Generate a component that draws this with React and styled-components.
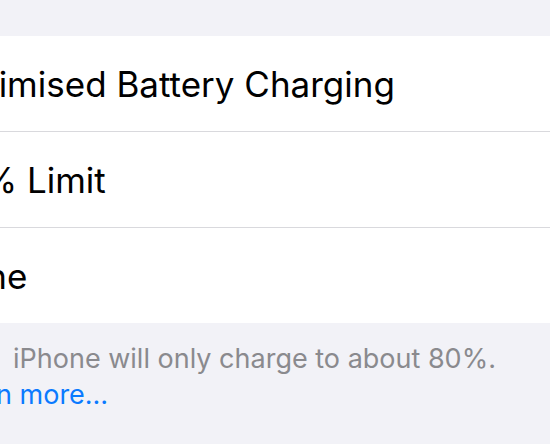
import styled, { createGlobalStyle } from "styled-components";

const GlobalStyle = createGlobalStyle`
  html, body {
    margin: 0;
    padding: 0;
    background: #f2f2f7;
    overflow: hidden;
  }
  body {
    font-family: Inter, "Noto Sans", "Liberation Sans", sans-serif;
    -webkit-font-smoothing: antialiased;
  }
`;

const Screen = styled.div`
  width: 550px;
  height: 444px;
  overflow: hidden;
  background: #f2f2f7;
`;

const Page = styled.div`
  margin-left: -61px;
  padding-top: 36px;
`;

const Group = styled.div`
  background: #ffffff;
  display: flex;
  flex-direction: column;
`;

const Row = styled.div`
  height: ${(p) => (p.$last ? "95px" : "96px")};
  display: flex;
  align-items: center;
  box-sizing: border-box;
  border-bottom: ${(p) => (p.$last ? "none" : "1px solid #d9d9dd")};
  padding-right: 20px;
`;

const Label = styled.span`
  font-size: 35px;
  color: #000;
  white-space: nowrap;
  margin-top: 1px;
`;

const Footer = styled.p`
  margin: 0;
  padding: 18px 30px 0 0;
  font-size: 27px;
  line-height: 36px;
  color: #8a8a8e;
`;

const Line = styled.span`
  display: block;
  white-space: nowrap;
  padding-left: ${(p) => p.$indent || 0}px;
`;

const LearnMore = styled.a`
  color: #0a7aff;
  text-decoration: none;
`;

const options = ["Optimised Battery Charging", "80% Limit", "None"];

const App = () => {
  return (
    <Screen>
      <GlobalStyle />
      <Page>
        <Group>
          {options.map((label, i) => (
            <Row key={label} $last={i === options.length - 1}>
              <Label>{label}</Label>
            </Row>
          ))}
        </Group>
        <Footer>
          <Line $indent={74}>iPhone will only charge to about 80%.</Line>
          <Line>
            <LearnMore href="#">Learn more…</LearnMore>
          </Line>
        </Footer>
      </Page>
    </Screen>
  );
};

export default App;
